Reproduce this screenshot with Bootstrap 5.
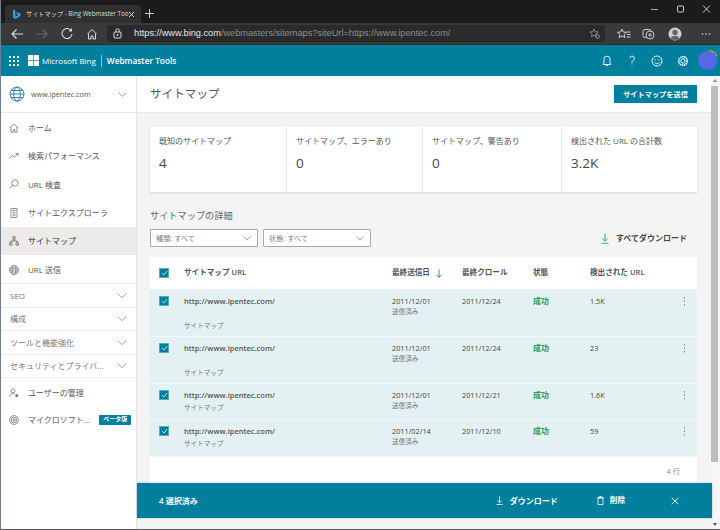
<!DOCTYPE html>
<html lang="ja">
<head>
<meta charset="utf-8">
<title>サイトマップ</title>
<link href="https://cdn.jsdelivr.net/npm/bootstrap@5.3.0/dist/css/bootstrap.min.css" rel="stylesheet">
<style>
html,body{height:100%;overflow:hidden}
body{width:720px;height:530px;font-family:"Open Sans","Noto Sans CJK JP",sans-serif;font-size:8px;color:#444;background:#f4f4f4;border-left:1px solid #6f7f8f;border-bottom:1px solid #555;line-height:1.2}
svg{display:block;flex:none}
.tabstrip{height:23px;background:#1b1b1b;padding:5px 0 0 4px;color:#ddd}
.tabbox{width:136px;height:18px;background:#303030;border-radius:4px 4px 0 0;padding:0 7px 0 7px;font-size:6.2px}
.tabicon{margin-right:5px}
.tabtitle{white-space:nowrap}
.winctl{gap:15px;padding-right:8px}
.toolbar{height:22px;background:#3a3a3a;padding:0 9px 0 9px;border-bottom:1px solid #2c2c2c}
.tool-l{gap:11px;width:98px}
.addr{width:502px;height:17px;background:#2a2a2a;border-radius:3px;padding:0 5px 0 6px;font-size:9.2px;color:#8d8d8d;white-space:nowrap;font-family:"Liberation Sans",sans-serif}
.addr b{font-weight:400;color:#e8e8e8}
.tool-r{gap:11.5px;margin-left:12px}
.appbar{height:31px;background:#00809d;color:#fff;padding:0 3px 0 8px}
.logomark{margin-left:1px;margin-right:3px}
.brand{font-size:8px;white-space:nowrap}
.brandstrong{font-weight:600;font-size:8.3px}
.brandsep{width:1px;height:12px;background:#8cc4d2;margin:0 5px}
.app-r{gap:11.3px}
.avatar{width:19px;height:19px;border-radius:50%;background:#5568e6;position:relative;margin-left:-3px}
.avatar svg{position:absolute;left:-1px;top:-2px}
.shell{height:453px}
.sidebar{width:136px;background:#fff;flex:none;border-right:1px solid #e6e6e6}
.sitepick{height:37px;border-bottom:1px solid #e9e9e9;padding:0 9px 0 8px;font-size:7.2px;color:#555}
.globe{margin-right:6px}
.navi{height:28.4px;padding:1px 0 0 8px;gap:9px;color:#555;font-size:8px;white-space:nowrap}
.navi.on{background:#edebe9;color:#333}
.navgroup{height:23.4px;padding:0 9px 0 9px;border-top:1px solid #efefef;color:#777;font-size:8px;white-space:nowrap}
.navlast{border-top:1px solid #efefef;padding-top:3px}
.betatag{background:#00809d;color:#fff;font-size:6px;padding:1px 4px;border-radius:1px;font-weight:600;margin-left:auto;margin-right:9px}
.mainwrap{min-width:0;position:relative}
.titlebar{height:37px;background:#fff;border-bottom:1px solid #e9e9e9;padding:0 14px 0 13px}
.pagetitle{font-size:11.6px;color:#555;margin:0 0 1px;font-weight:400}
.sendbtn{background:#00809d;color:#fff;border:0;border-radius:1px;width:83px;height:18px;font-size:7.2px;font-weight:700;padding:0;box-shadow:0 0 1px #5aa}
.content{padding:14px 14px 0 13px}
.statrow{background:#fff;height:65px;box-shadow:0 1px 2px rgba(0,0,0,.14)}
.statcell{padding:9px 9px 0 9px;border-left:1px solid #ececec;color:#555;font-size:8px}
.statcell:first-child{border-left:0;width:136px;flex:none}
.statcell:nth-child(2){width:136px;flex:none}
.statcell:nth-child(3){width:139px;flex:none}
.statnum{font-size:13.5px;color:#444;margin-top:9px;line-height:1.2}
.subhead{font-size:9.2px;color:#666;margin:18px 0 8px;font-weight:400;line-height:1.2}
.filters{gap:5px;height:18px;margin-bottom:10px}
.pick{width:108px;height:18px;border:1px solid #a9a9a9;background:#fff;border-radius:1px;padding:0 6px 0 5px;color:#808080;font-size:7.2px}
.dlall{margin-left:auto;margin-right:10px;gap:7px;font-size:8px;font-weight:600;color:#444}
.panel{background:#fff;height:240px}
.thead-row,.trow{display:grid;grid-template-columns:34px 208px 70px 71px 57px 93px 10px;align-items:start}
.thead-row{height:33px;align-items:center;border-bottom:1px solid #f0f0f0;font-size:7.6px;font-weight:600;color:#555}
.chk{width:10px;height:10px;background:#00809d;margin-left:9px;border:1px solid #5aaabd}
.trow{background:#e3f1f3;border-bottom:1px solid #f3f9fa;padding-top:6px;font-size:7.3px;color:#444;line-height:10px}
.trow.tall{height:47px}
.trow.mid{height:36.4px}
.urlline{font-weight:600;color:#555;font-size:7.5px;line-height:10px}
.tinyline{font-size:6.6px;color:#777;line-height:10px;margin-top:1px}
.tall .sitekind{margin-top:15px}
.mid .sitekind{margin-top:3px}
.okstat{color:#3a9a44;font-weight:600;font-size:8px}
.selbar{position:absolute;left:0;top:407px;width:575px;height:35px;background:#00809d;color:#fff;padding:0 33px 0 22px;font-size:8px;font-weight:600;box-shadow:0 0 2px rgba(0,0,0,.25)}
.sel-dl{margin-left:auto;gap:7px;margin-right:39px}
.sel-del{gap:6px;margin-right:46px;font-size:7.6px}
.rowcount{text-align:right;padding:10px 17px 0 0;color:#888;font-size:7.2px}
.scrolltrack{width:9px;flex:none;background:#f6f6f6;position:relative;padding:10px 2px 0 0}
.scrollthumb{height:376px;background:#bdbdbd}
.arrow-up,.arrow-down{position:absolute;left:2px;width:0;height:0;border-left:2.5px solid transparent;border-right:2.5px solid transparent}
.arrow-up{top:3px;border-bottom:3px solid #888}
.arrow-down{bottom:3px;border-top:3px solid #555}
</style>
</head>
<body>
<div class="tabstrip d-flex align-items-start">
  <div class="tabbox d-flex align-items-center">
    <svg class="tabicon" width="9" height="11" viewBox="0 0 9 11"><path d="M1 .5l2.400.9v6.200l3-1.700-1.300-.7-.9-2.200 4.300 1.600v2.300L3.500 10 1 8.500z" fill="#2f9fe8"/></svg>
    <span class="tabtitle">サイトマップ - Bing Webmaster Too</span>
    <svg class="ms-auto" width="7" height="7" viewBox="0 0 7 7"><path d="M1 1l5 5M6 1L1 6" stroke="#ddd" stroke-width="1"/></svg>
  </div>
  <svg class="ms-1 mt-1" width="9" height="9" viewBox="0 0 9 9"><path d="M4.500 0v9M0 4.500h9" stroke="#ccc" stroke-width="1"/></svg>
  <div class="winctl d-flex ms-auto align-items-center" style="height:8px">
    <svg width="11" height="8" viewBox="0 0 11 8"><path d="M2 4.500h7" stroke="#aaa"/></svg>
    <svg width="11" height="8" viewBox="0 0 11 8"><rect x="2.500" y="1" width="6" height="6" rx="1" fill="none" stroke="#ccc"/></svg>
    <svg width="11" height="8" viewBox="0 0 11 8"><path d="M2 .5l7 7M9 .5l-7 7" stroke="#ccc"/></svg>
  </div>
</div>
<div class="toolbar d-flex align-items-center">
  <div class="tool-l d-flex align-items-center">
    <svg width="14" height="12" viewBox="0 0 14 12"><path d="M13 6H2M6.500 1.500L2 6l4.500 4.500" fill="none" stroke="#ddd" stroke-width="1.200"/></svg>
    <svg width="14" height="12" viewBox="0 0 14 12"><path d="M1 6h11M7.500 1.500L12 6l-4.500 4.500" fill="none" stroke="#666" stroke-width="1.200"/></svg>
    <svg width="14" height="12" viewBox="0 0 14 12"><path d="M11 2.500A5 5 0 1 0 12 6M11.500 .5v2.500H9" fill="none" stroke="#ddd" stroke-width="1.100"/></svg>
    <svg width="14" height="12" viewBox="0 0 14 12"><path d="M2.500 6L7 1.500 11.500 6M3.500 5.500v5.500h2.500V8h2v3h2.500V5.500" fill="none" stroke="#ddd" stroke-width="1"/></svg>
  </div>
  <div class="addr d-flex align-items-center">
    <svg class="me-2" width="9" height="11" viewBox="0 0 9 11"><rect x="1" y="4" width="7" height="6" rx="1" fill="none" stroke="#ddd"/><path d="M2.800 4V2.500a1.700 1.700 0 0 1 3.400 0V4" fill="none" stroke="#ddd"/><circle cx="4.500" cy="7" r=".9" fill="#ddd"/></svg>
    <span class="ms-1"><b>https://www.bing.com</b>/webmasters/sitemaps?siteUrl=https://www.ipentec.com/</span>
    <svg class="ms-auto" width="11" height="11" viewBox="0 0 11 11"><path d="M5 1l1.200 2.700 2.900.3-2.200 2 .6 2.900L5 7.400 2.500 8.900l.6-2.900L1 4l2.900-.3z" fill="none" stroke="#999" stroke-width=".8"/><circle cx="8.500" cy="8.500" r="1.800" fill="#2a2a2a" stroke="#bbb" stroke-width=".8"/></svg>
  </div>
  <div class="tool-r d-flex align-items-center">
    <svg width="14" height="12" viewBox="0 0 14 12"><path d="M5 1l1.300 3 3.200.3-2.400 2.100.7 3.200L5 8l-2.800 1.600.7-3.200L.5 4.300 3.700 4zM9.500 4h4M10 6.500h3.500M9.500 9h4" fill="none" stroke="#ddd" stroke-width=".9"/></svg>
    <svg width="14" height="12" viewBox="0 0 14 12"><rect x="1" y="1.500" width="8" height="8" rx="2" fill="none" stroke="#ddd" stroke-width=".9"/><circle cx="8" cy="7" r="4" fill="#3a3a3a" stroke="#ddd" stroke-width=".9"/><path d="M8 5v4M6 7h4" stroke="#ddd" stroke-width=".8"/></svg>
    <svg width="14" height="14" viewBox="0 0 14 14"><circle cx="7" cy="7" r="6.500" fill="#d0d0d0"/><circle cx="7" cy="5.500" r="2.700" fill="#666"/><path d="M2.500 11.500a4.700 4 0 0 1 9 0A6.500 6.500 0 0 1 2.500 11.500" fill="#666"/></svg>
    <svg class="ms-2" width="10" height="4" viewBox="0 0 10 4"><circle cx="1.500" cy="2" r=".8" fill="#ddd"/><circle cx="5" cy="2" r=".8" fill="#ddd"/><circle cx="8.500" cy="2" r=".8" fill="#ddd"/></svg>
  </div>
</div>
<div class="appbar d-flex align-items-center">
  <svg width="10" height="10" viewBox="0 0 10 10" class="me-2" fill="#fff"><rect x="0" y="0" width="2" height="2"/><rect x="4" y="0" width="2" height="2"/><rect x="8" y="0" width="2" height="2"/><rect x="0" y="4" width="2" height="2"/><rect x="4" y="4" width="2" height="2"/><rect x="8" y="4" width="2" height="2"/><rect x="0" y="8" width="2" height="2"/><rect x="4" y="8" width="2" height="2"/><rect x="8" y="8" width="2" height="2"/></svg>
  <svg class="logomark" width="11" height="11" viewBox="0 0 11 11" fill="#fff"><rect width="5.200" height="5.200"/><rect x="5.800" width="5.200" height="5.200"/><rect y="5.800" width="5.200" height="5.200"/><rect x="5.800" y="5.800" width="5.200" height="5.200"/></svg>
  <span class="brand">Microsoft Bing</span><span class="brandsep"></span><span class="brand brandstrong">Webmaster Tools</span>
  <div class="app-r d-flex align-items-center ms-auto">
    <svg width="14" height="14" viewBox="0 0 14 14"><path d="M7 2.200a3 3 0 0 0-3 3v4L3.200 10.500h7.600L10 9.200v-4a3 3 0 0 0-3-3zM6 11.500h2" fill="none" stroke="#fff" stroke-width=".9"/></svg>
    <svg width="14" height="14" viewBox="0 0 14 14"><path d="M4.800 4.300A2.300 2.300 0 1 1 8 6.500c-.8.500-1 1-1 2v.8M7 11.200v.6" fill="none" stroke="#fff" stroke-width=".9"/></svg>
    <svg width="14" height="14" viewBox="0 0 14 14"><circle cx="7" cy="7" r="5" fill="none" stroke="#fff" stroke-width=".9"/><circle cx="5.200" cy="5.800" r=".6" fill="#fff"/><circle cx="8.800" cy="5.800" r=".6" fill="#fff"/><path d="M4.500 8.200a2.800 2.800 0 0 0 5 0" fill="none" stroke="#fff" stroke-width=".8"/></svg>
    <svg width="14" height="14" viewBox="0 0 14 14"><circle cx="7" cy="7" r="2.200" fill="none" stroke="#fff" stroke-width=".9"/><circle cx="7" cy="7" r="4.300" fill="none" stroke="#fff" stroke-width="1.600" stroke-dasharray="1.500 .6"/></svg>
    <div class="avatar"><svg width="21" height="23" viewBox="0 0 21 23"><path d="M12 1.500a9.500 9.500 0 0 1 8 6" fill="none" stroke="#f0b90b" stroke-width="1"/></svg></div>
  </div>
</div>
<div class="shell d-flex">
  <aside class="sidebar">
    <div class="sitepick d-flex align-items-center">
      <svg class="globe" width="16" height="16" viewBox="0 0 16 16"><g fill="none" stroke="#1f7f9e" stroke-width=".9"><circle cx="8" cy="8" r="7"/><ellipse cx="8" cy="8" rx="3.300" ry="7"/><path d="M1 8h14M2 4.500h12M2 11.500h12"/></g></svg>
      <span>www.ipentec.com</span>
      <svg class="ms-auto" width="9" height="5" viewBox="0 0 9 5"><path d="M.5.500l4 4 4-4" fill="none" stroke="#888" stroke-width=".8"/></svg>
    </div>
    <div class="navi d-flex align-items-center"><svg width="10" height="10" viewBox="0 0 10 10"><path d="M.8 5L5 .9 9.200 5M2 4.200v5h2.200V6.500h1.600v2.700H8v-5" fill="none" stroke="#777" stroke-width=".8"/></svg>ホーム</div>
    <div class="navi d-flex align-items-center"><svg width="10" height="10" viewBox="0 0 10 10"><path d="M.5 7.500l3-3 2 1.500L9 2.500M6.500 2.500H9V5" fill="none" stroke="#777" stroke-width=".9"/></svg>検索パフォーマンス</div>
    <div class="navi d-flex align-items-center"><svg width="10" height="10" viewBox="0 0 10 10"><circle cx="6" cy="4" r="3.200" fill="none" stroke="#777" stroke-width=".8"/><path d="M3.700 6.300L.6 9.400" stroke="#777" stroke-width=".9"/></svg>URL 検査</div>
    <div class="navi d-flex align-items-center"><svg width="10" height="10" viewBox="0 0 10 10"><path d="M2 .5h6v9H2zM3.500 2.500h3M3.500 4.200h3M3.500 6h3M3.500 7.700h3" fill="none" stroke="#777" stroke-width=".8"/></svg>サイトエクスプローラ</div>
    <div class="navi on d-flex align-items-center"><svg width="10" height="10" viewBox="0 0 10 10"><path d="M3.800.8h2.400v2.400H3.800zM.6 6.800H3v2.400H.6zM7 6.800h2.400v2.400H7zM5 3.200v1.800M1.800 6.800V5h6.400v1.800" fill="none" stroke="#666" stroke-width=".8"/></svg>サイトマップ</div>
    <div class="navi d-flex align-items-center"><svg width="10" height="10" viewBox="0 0 10 10"><g fill="none" stroke="#777" stroke-width=".8"><circle cx="5" cy="5" r="4.500"/><ellipse cx="5" cy="5" rx="2" ry="4.500"/><path d="M.5 5h9M1 3h8M1 7h8"/></g></svg>URL 送信</div>
    <div class="navgroup d-flex align-items-center justify-content-between">SEO<svg width="10" height="5" viewBox="0 0 10 5"><path d="M.5.500L5 4.500 9.500.5" fill="none" stroke="#888" stroke-width=".8"/></svg></div>
    <div class="navgroup d-flex align-items-center justify-content-between">構成<svg width="10" height="5" viewBox="0 0 10 5"><path d="M.5.500L5 4.500 9.500.5" fill="none" stroke="#888" stroke-width=".8"/></svg></div>
    <div class="navgroup d-flex align-items-center justify-content-between">ツールと機能強化<svg width="10" height="5" viewBox="0 0 10 5"><path d="M.5.500L5 4.500 9.500.5" fill="none" stroke="#888" stroke-width=".8"/></svg></div>
    <div class="navgroup d-flex align-items-center justify-content-between">セキュリティとプライバ...<svg width="10" height="5" viewBox="0 0 10 5"><path d="M.5.500L5 4.500 9.500.5" fill="none" stroke="#888" stroke-width=".8"/></svg></div>
    <div class="navi navlast d-flex align-items-center"><svg width="10" height="10" viewBox="0 0 10 10"><circle cx="4" cy="2.800" r="2" fill="none" stroke="#777" stroke-width=".8"/><path d="M.7 9a3.400 3.400 0 0 1 5-3" fill="none" stroke="#777" stroke-width=".8"/><circle cx="7.800" cy="7.500" r="1.500" fill="#777"/></svg>ユーザーの管理</div>
    <div class="navi d-flex align-items-center"><svg width="10" height="10" viewBox="0 0 10 10"><g fill="none" stroke="#777" stroke-width=".8"><circle cx="5" cy="5" r="4.400"/><circle cx="5" cy="5" r="2.800"/><circle cx="5" cy="5" r="1.200"/></g></svg>マイクロソフト...<span class="betatag">ベータ版</span></div>
  </aside>
  <div class="mainwrap d-flex flex-grow-1">
    <div class="flex-grow-1">
      <div class="titlebar d-flex align-items-center justify-content-between">
        <h1 class="pagetitle">サイトマップ</h1>
        <button class="sendbtn" type="button">サイトマップを送信</button>
      </div>
      <div class="content">
        <div class="statrow d-flex">
          <div class="statcell">既知のサイトマップ<div class="statnum">4</div></div>
          <div class="statcell">サイトマップ、エラーあり<div class="statnum">0</div></div>
          <div class="statcell">サイトマップ、警告あり<div class="statnum">0</div></div>
          <div class="statcell flex-grow-1">検出された URL の合計数<div class="statnum">3.2K</div></div>
        </div>
        <h2 class="subhead">サイトマップの詳細</h2>
        <div class="filters d-flex align-items-center">
          <div class="pick d-flex align-items-center justify-content-between">種類: すべて<svg width="8" height="5" viewBox="0 0 8 5"><path d="M.5.500L4 4 7.500.5" fill="none" stroke="#888" stroke-width=".8"/></svg></div>
          <div class="pick d-flex align-items-center justify-content-between">状態: すべて<svg width="8" height="5" viewBox="0 0 8 5"><path d="M.5.500L4 4 7.500.5" fill="none" stroke="#888" stroke-width=".8"/></svg></div>
          <div class="dlall d-flex align-items-center"><svg width="8" height="11" viewBox="0 0 8 11"><path d="M4 .5v7.500M1.200 5.500L4 8.300l2.800-2.800M.5 10.300h7" fill="none" stroke="#2d94ad" stroke-width=".9"/></svg>すべてダウンロード</div>
        </div>
        <div class="panel">
          <div class="thead-row">
            <div><div class="chk d-flex align-items-center justify-content-center"><svg width="7" height="6" viewBox="0 0 7 6"><path d="M1 3l2 2 3-4" fill="none" stroke="#cfe" stroke-width=".8"/></svg></div></div>
            <div>サイトマップ URL</div>
            <div class="d-flex align-items-center justify-content-between" style="padding-right:20px">最終送信日<svg width="6" height="9" viewBox="0 0 6 9"><path d="M3 .5v8M.8 6L3 8.300 5.200 6" fill="none" stroke="#2d7f9e" stroke-width=".9"/></svg></div>
            <div>最終クロール</div><div>状態</div><div>検出された URL</div><div></div>
          </div>
          <div class="trow tall">
            <div><div class="chk d-flex align-items-center justify-content-center"><svg width="7" height="6" viewBox="0 0 7 6"><path d="M1 3l2 2 3-4" fill="none" stroke="#cfe" stroke-width=".8"/></svg></div></div>
            <div><div class="urlline">http://www.ipentec.com/</div><div class="tinyline sitekind">サイトマップ</div></div>
            <div><div>2011/12/01</div><div class="tinyline">送信済み</div></div>
            <div>2011/12/24</div><div class="okstat">成功</div><div>1.5K</div>
            <svg width="3" height="10" viewBox="0 0 3 10" fill="#888"><rect x="1" y="1" width="1" height="1.500"/><rect x="1" y="4.500" width="1" height="1.500"/><rect x="1" y="8" width="1" height="1.500"/></svg>
          </div>
          <div class="trow tall">
            <div><div class="chk d-flex align-items-center justify-content-center"><svg width="7" height="6" viewBox="0 0 7 6"><path d="M1 3l2 2 3-4" fill="none" stroke="#cfe" stroke-width=".8"/></svg></div></div>
            <div><div class="urlline">http://www.ipentec.com/</div><div class="tinyline sitekind">サイトマップ</div></div>
            <div><div>2011/12/01</div><div class="tinyline">送信済み</div></div>
            <div>2011/12/24</div><div class="okstat">成功</div><div>23</div>
            <svg width="3" height="10" viewBox="0 0 3 10" fill="#888"><rect x="1" y="1" width="1" height="1.500"/><rect x="1" y="4.500" width="1" height="1.500"/><rect x="1" y="8" width="1" height="1.500"/></svg>
          </div>
          <div class="trow mid">
            <div><div class="chk d-flex align-items-center justify-content-center"><svg width="7" height="6" viewBox="0 0 7 6"><path d="M1 3l2 2 3-4" fill="none" stroke="#cfe" stroke-width=".8"/></svg></div></div>
            <div><div class="urlline">http://www.ipentec.com/</div><div class="tinyline sitekind">サイトマップ</div></div>
            <div><div>2011/12/01</div><div class="tinyline">送信済み</div></div>
            <div>2011/12/21</div><div class="okstat">成功</div><div>1.6K</div>
            <svg width="3" height="10" viewBox="0 0 3 10" fill="#888"><rect x="1" y="1" width="1" height="1.500"/><rect x="1" y="4.500" width="1" height="1.500"/><rect x="1" y="8" width="1" height="1.500"/></svg>
          </div>
          <div class="trow mid">
            <div><div class="chk d-flex align-items-center justify-content-center"><svg width="7" height="6" viewBox="0 0 7 6"><path d="M1 3l2 2 3-4" fill="none" stroke="#cfe" stroke-width=".8"/></svg></div></div>
            <div><div class="urlline">http://www.ipentec.com/</div><div class="tinyline sitekind">サイトマップ</div></div>
            <div><div>2011/02/14</div><div class="tinyline">送信済み</div></div>
            <div>2011/12/10</div><div class="okstat">成功</div><div>59</div>
            <svg width="3" height="10" viewBox="0 0 3 10" fill="#888"><rect x="1" y="1" width="1" height="1.500"/><rect x="1" y="4.500" width="1" height="1.500"/><rect x="1" y="8" width="1" height="1.500"/></svg>
          </div>
          <div class="rowcount">4 行</div>
        </div>
      </div>
    </div>
    <div class="scrolltrack"><div class="arrow-up"></div><div class="scrollthumb"></div><div class="arrow-down"></div></div>
    <div class="selbar d-flex align-items-center">
      <span>4 選択済み</span>
      <div class="sel-dl d-flex align-items-center"><svg width="7" height="9" viewBox="0 0 7 9"><path d="M3.500 .5v6M1.300 4.500l2.200 2.200 2.200-2.200M.5 8.500h6" fill="none" stroke="#fff" stroke-width=".8"/></svg>ダウンロード</div>
      <div class="sel-del d-flex align-items-center"><svg width="7" height="9" viewBox="0 0 7 9"><path d="M1 2.200h5v6.300H1zM.3 1.500h6.400M2.500 1V.5h2V1" fill="none" stroke="#fff" stroke-width=".8"/></svg>削除</div>
      <svg width="8" height="8" viewBox="0 0 8 8"><path d="M.7.700l6.600 6.600M7.300.7L.7 7.300" stroke="#fff" stroke-width=".9"/></svg>
    </div>
  </div>
</div>
</body>
</html>
